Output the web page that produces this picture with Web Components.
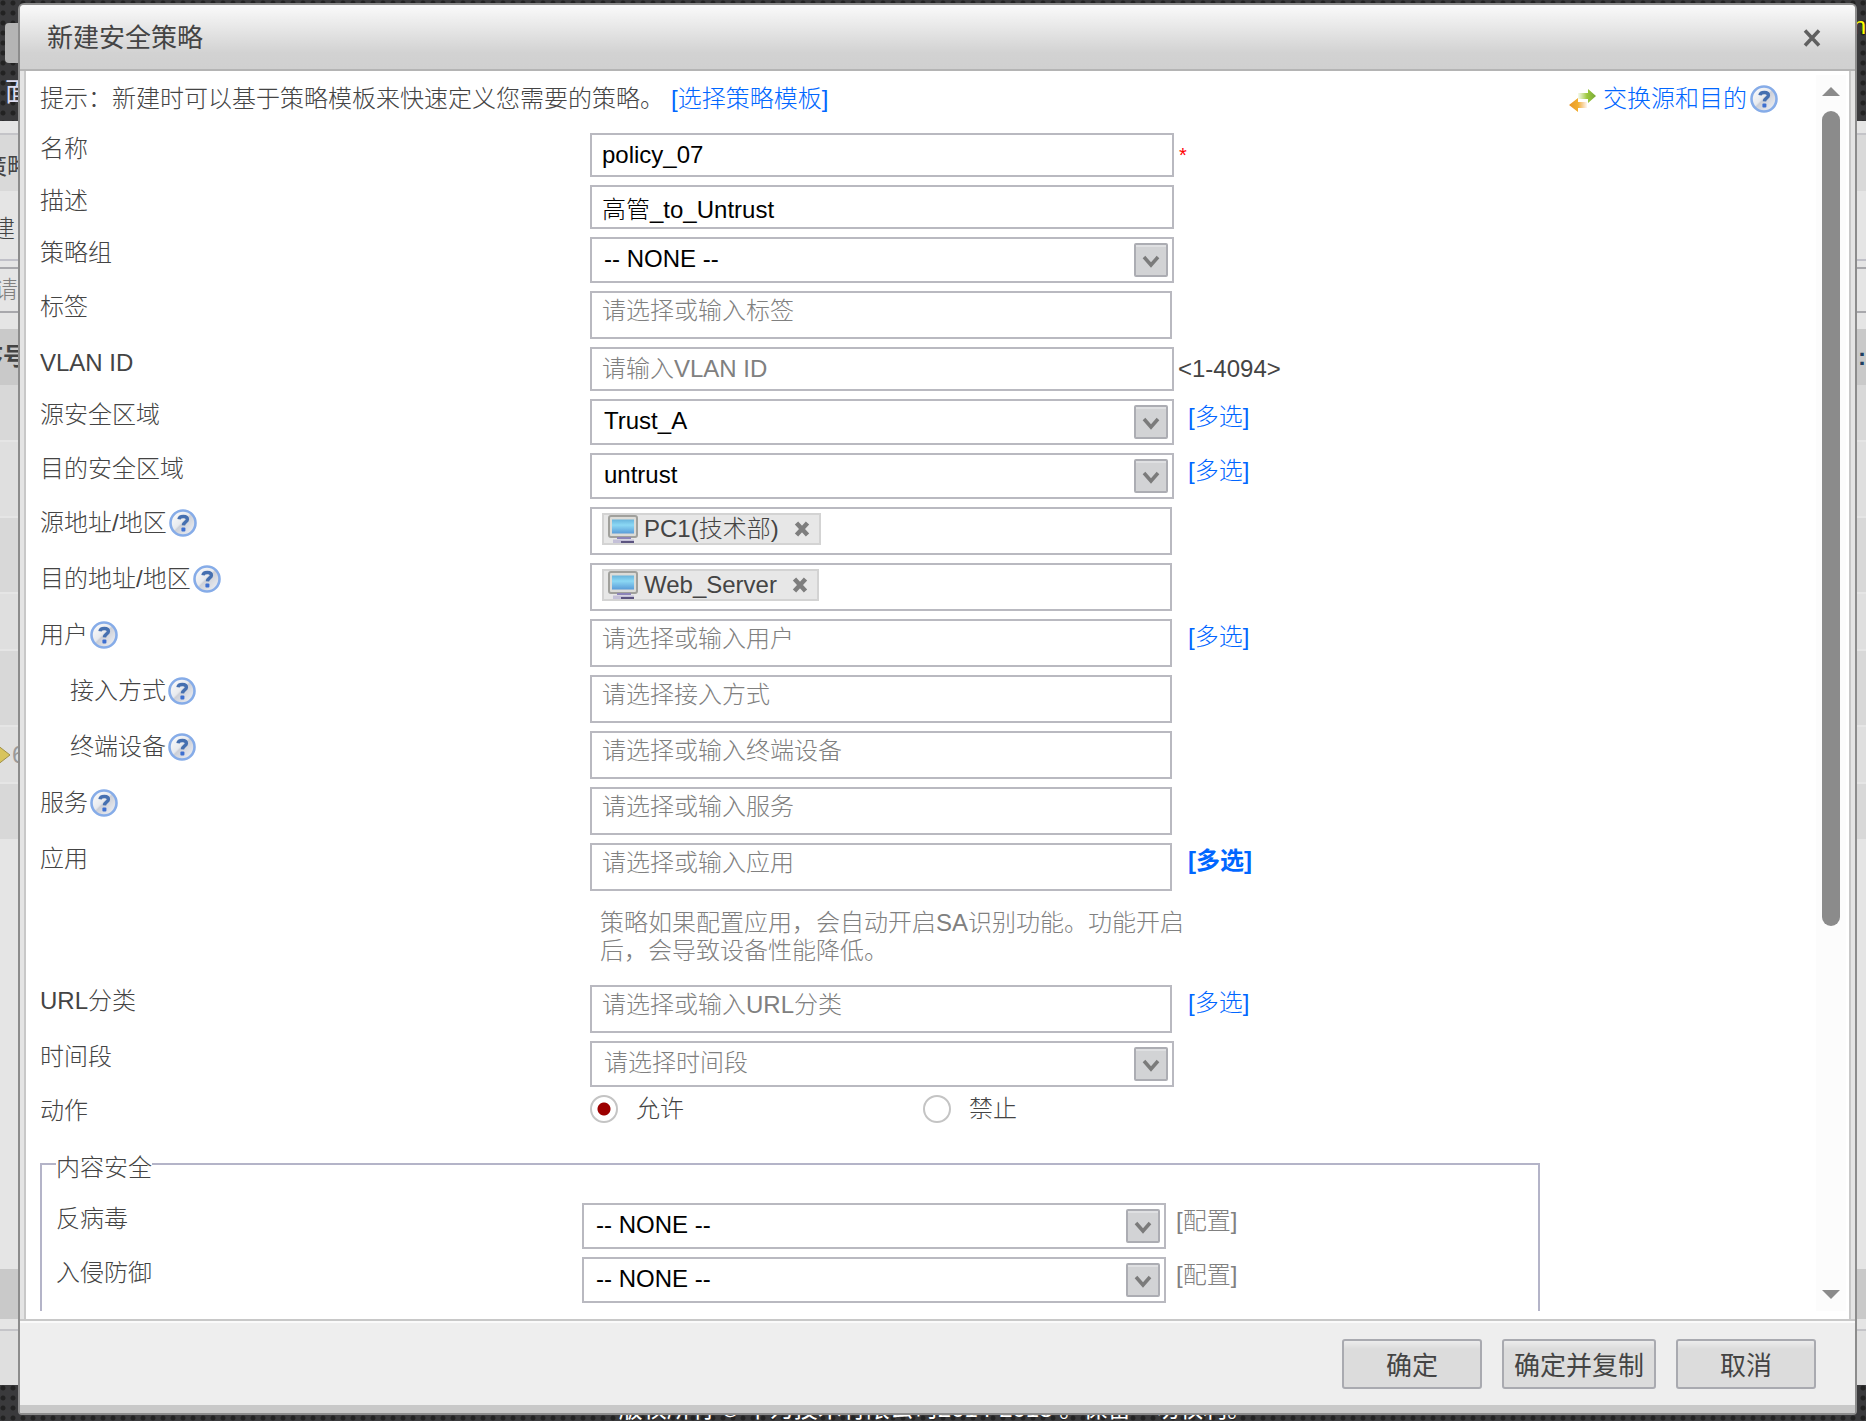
<!DOCTYPE html>
<html lang="zh-CN">
<head>
<meta charset="utf-8">
<title>新建安全策略</title>
<style>
    html, body {
        height: 100%;
        margin: 0;
    }

    body {
        overflow: hidden;
        font-family: "Liberation Sans", "Noto Sans CJK SC", sans-serif;
        font-size: 24px;
        font-weight: 300;
        line-height: 32px;
        color: #444;
    }
</style>
</head>
<body>

<console-backdrop></console-backdrop>

<policy-dialog heading="新建安全策略">
    <tip-bar></tip-bar>
    <text-row label="名称" value="policy_07"><required-mark></required-mark></text-row>
    <text-row label="描述" value="高管_to_Untrust"></text-row>
    <select-row label="策略组" value="-- NONE --"></select-row>
    <token-row label="标签" placeholder="请选择或输入标签"></token-row>
    <text-row label="VLAN ID" placeholder="请输入VLAN ID"><range-hint>&lt;1-4094&gt;</range-hint></text-row>
    <select-row label="源安全区域" value="Trust_A"><row-link>多选</row-link></select-row>
    <select-row label="目的安全区域" value="untrust"><row-link>多选</row-link></select-row>
    <token-row label="源地址/地区" token="PC1(技术部)" help></token-row>
    <token-row label="目的地址/地区" token="Web_Server" help></token-row>
    <token-row label="用户" placeholder="请选择或输入用户" help><row-link>多选</row-link></token-row>
    <token-row label="接入方式" placeholder="请选择接入方式" help indent></token-row>
    <token-row label="终端设备" placeholder="请选择或输入终端设备" help indent></token-row>
    <token-row label="服务" placeholder="请选择或输入服务" help></token-row>
    <token-row label="应用" placeholder="请选择或输入应用"><row-link strong>多选</row-link></token-row>
    <note-row>策略如果配置应用，会自动开启SA识别功能。功能开启后，会导致设备性能降低。</note-row>
    <token-row label="URL分类" placeholder="请选择或输入URL分类"><row-link>多选</row-link></token-row>
    <select-row label="时间段" value="请选择时间段" empty></select-row>
    <radio-row label="动作" options="允许,禁止"></radio-row>
    <field-group legend="内容安全">
        <select-row label="反病毒" value="-- NONE --"><row-link muted>配置</row-link></select-row>
        <select-row label="入侵防御" value="-- NONE --"><row-link muted>配置</row-link></select-row>
    </field-group>
</policy-dialog>

<script>
class HelpIcon extends HTMLElement {

    connectedCallback() {
        this.attachShadow({mode: 'open'}).innerHTML = `
            <style>
                :host { display: inline-flex; }
                svg { display: block; }
            </style>
            <svg width="28" height="28" viewBox="0 0 28 28" role="img" aria-label="help">
                <defs>
                    <linearGradient id="face" x1="0" y1="0" x2="1" y2="1">
                        <stop offset="0" stop-color="#fff"/>
                        <stop offset=".45" stop-color="#e8eaee"/>
                        <stop offset=".5" stop-color="#cdd0d8"/>
                        <stop offset="1" stop-color="#f4f6fa"/>
                    </linearGradient>
                </defs>
                <circle cx="14" cy="14" r="12.5" fill="url(#face)" stroke="#86ace8" stroke-width="2.6"/>
                <path d="M10 10.2C10.4 6.6 18.4 6.4 18.4 10.4C18.4 13 14.6 12.8 14.4 16.4" fill="none" stroke="#4670b0" stroke-width="3.4"/>
                <rect x="12.4" y="18.4" width="4" height="4" rx="1" fill="#3d6fd0"/>
            </svg>
        `;
    }
}

class TipBar extends HTMLElement {

    connectedCallback() {
        this.attachShadow({mode: 'open'}).innerHTML = `
            <style>
                :host {
                    display: flex;
                    justify-content: space-between;
                    padding: 8px 38px 18px 0;
                }

                p { margin: 0; }

                a {
                    color: #06f;
                    text-decoration: none;
                }

                p a { margin-left: 7px; }

                .swap {
                    display: flex;
                    align-items: center;
                    height: 32px;
                }

                .swap svg { margin-right: 5px; }

                help-icon { margin-left: 3px; }
            </style>

            <p>提示：新建时可以基于策略模板来快速定义您需要的策略。<a href="#">[选择策略模板]</a></p>
            <div class="swap">
                <svg width="30" height="28" viewBox="0 0 30 28">
                    <defs>
                        <linearGradient id="green"><stop offset="0" stop-color="#a9cc50" stop-opacity=".1"/><stop offset=".5" stop-color="#9cc83c"/><stop offset="1" stop-color="#78a838"/></linearGradient>
                        <linearGradient id="orange"><stop offset="0" stop-color="#e8962a"/><stop offset=".5" stop-color="#f2ae2e"/><stop offset="1" stop-color="#f0a850" stop-opacity=".1"/></linearGradient>
                    </defs>
                    <path d="M10 8H20V4L28 11L20 18V14H10Z" fill="url(#green)"/>
                    <path d="M19 17H10V13L1 20L10 27V23H19Z" fill="url(#orange)"/>
                </svg>
                <a href="#">交换源和目的</a><help-icon></help-icon>
            </div>
        `;
    }
}

class RequiredMark extends HTMLElement {

    connectedCallback() {
        this.attachShadow({mode: 'open'}).innerHTML = `
            <style>
                :host {
                    display: block;
                    padding: 6px 0 0 5px;
                    color: #f00;
                    font-size: 20px;
                }
            </style>
            *
        `;
    }
}

class RangeHint extends HTMLElement {

    connectedCallback() {
        this.attachShadow({mode: 'open'}).innerHTML = `
            <style>
                :host {
                    display: block;
                    padding: 6px 0 0 4px;
                }
            </style>
            <slot></slot>
        `;
    }
}

class RowLink extends HTMLElement {

    connectedCallback() {
        this.attachShadow({mode: 'open'}).innerHTML = `
            <style>
                :host {
                    display: block;
                    padding: 2px 0 0 14px;
                }

                :host([strong]) { font-weight: bold; }

                :host([muted]) { padding-left: 10px; }

                a {
                    color: #06f;
                    text-decoration: none;
                }

                :host([muted]) a { color: #808080; }
            </style>
            <a href="#">[<slot></slot>]</a>
        `;
    }
}

// label + control + whatever is slotted behind it
class FieldRow extends HTMLElement {

    connectedCallback() {
        this.attachShadow({mode: 'open'}).innerHTML = `
            <style>
                :host {
                    display: grid;
                    grid-template-columns: var(--label-width, 550px) minmax(0, 584px) auto;
                    justify-content: start;
                    margin-bottom: 8px;
                }

                .caption {
                    display: flex;
                    align-items: center;
                    height: 32px;
                }

                :host([indent]) .caption { padding-left: 30px; }

                help-icon { margin-left: 2px; }

                input, select {
                    box-sizing: border-box;
                    width: 100%;
                    margin: 0;
                    border: 2px solid #b9b9c0;
                    border-radius: 0;
                    background: #fff;
                    color: #000;
                    font: inherit;
                    outline: none;
                }

                input::placeholder {
                    color: #808080;
                    opacity: 1;
                }

                ${this.styles()}
            </style>

            <div class="caption">
                <label for="control">${this.getAttribute('label')}</label>
                ${this.hasAttribute('help') ? '<help-icon></help-icon>' : ''}
            </div>
            ${this.control()}
            <slot></slot>
        `;
    }

    styles() {
        return '';
    }

    control() {
        return '';
    }
}

class TextRow extends FieldRow {

    styles() {
        return `
            input {
                height: 44px;
                padding: 0 10px;
            }
        `;
    }

    control() {
        const value = this.getAttribute('value') || '';
        const placeholder = this.getAttribute('placeholder') || '';
        return `<input id="control" type="text" value="${value}" placeholder="${placeholder}">`;
    }
}

class SelectRow extends FieldRow {

    styles() {
        return `
            .select { display: grid; }

            select {
                grid-area: 1 / 1;
                height: 46px;
                padding: 0 44px 2px 12px;
                appearance: none;
            }

            :host([empty]) select { color: #808080; }

            .select svg {
                grid-area: 1 / 1;
                place-self: center end;
                margin-right: 6px;
                pointer-events: none;
            }
        `;
    }

    control() {
        return `
            <div class="select">
                <select id="control"><option>${this.getAttribute('value')}</option></select>
                <svg width="34" height="34" viewBox="0 0 34 34">
                    <rect x="1" y="1" width="32" height="32" rx="1" fill="#d2d3d5" stroke="#acadb3" stroke-width="2"/>
                    <path d="M2 3H32" stroke="#dfe0e2" stroke-width="2"/>
                    <path d="M10 14L17 22L24 14" fill="none" stroke="#7b7b7b" stroke-width="3.500"/>
                </svg>
            </div>
        `;
    }
}

class TokenRow extends FieldRow {

    styles() {
        return `
            .tokens {
                box-sizing: border-box;
                display: flex;
                height: 48px;
                margin-right: 2px;
                padding: 4px 0 8px 10px;
                border: 2px solid #b9b9c0;
            }

            .token {
                box-sizing: border-box;
                display: flex;
                flex: none;
                align-items: center;
                height: 32px;
                padding: 0 9px 0 4px;
                border: 2px solid #d3d3d3;
                background: #e7e7e7;
            }

            .token span { margin: 0 15px 0 6px; }

            .token button {
                display: flex;
                padding: 0;
                border: 0;
                background: none;
            }

            .tokens input {
                flex: 1;
                min-width: 0;
                height: 28px;
                padding: 0;
                border: 0;
            }
        `;
    }

    control() {
        const token = this.getAttribute('token');
        const placeholder = this.getAttribute('placeholder') || '';
        return `
            <div class="tokens">
                ${token ? this.token(token) : ''}
                <input id="control" type="text" placeholder="${placeholder}">
            </div>
        `;
    }

    token(text) {
        return `
            <div class="token">
                <svg width="30" height="28" viewBox="0 0 30 28">
                    <defs>
                        <linearGradient id="screen" x1="0" y1="0" x2="0" y2="1">
                            <stop offset="0" stop-color="#68b4dc"/>
                            <stop offset=".4" stop-color="#8cd8f4"/>
                            <stop offset="1" stop-color="#5a9cd8"/>
                        </linearGradient>
                    </defs>
                    <rect x="1" y="1" width="28" height="21" rx="2" fill="#dcdcd8" stroke="#a0a09c" stroke-width="2"/>
                    <rect x="4" y="4.500" width="22" height="14" fill="url(#screen)"/>
                    <path d="M9 22H23V24H9Z" fill="#8c84b8"/>
                    <path d="M5 24.500H26V28H5Z" fill="#c4c0d8"/>
                    <path d="M13 26H26V28H13Z" fill="#5c5480"/>
                </svg>
                <span>${text}</span>
                <button type="button" aria-label="remove">
                    <svg width="16" height="16" viewBox="0 0 16 16"><path d="M2.500 2L13.500 14M13.500 2L2.500 14" stroke="#7e7e7e" stroke-width="4.500"/></svg>
                </button>
            </div>
        `;
    }
}

class NoteRow extends HTMLElement {

    connectedCallback() {
        this.attachShadow({mode: 'open'}).innerHTML = `
            <style>
                :host {
                    display: block;
                    max-width: 590px;
                    margin: 0 0 20px var(--label-width, 550px);
                    padding: 10px 0 0 10px;
                    color: #808080;
                    line-height: 28px;
                }
            </style>
            <slot></slot>
        `;
    }
}

class RadioRow extends HTMLElement {

    connectedCallback() {
        const options = this.getAttribute('options').split(',');
        this.attachShadow({mode: 'open'}).innerHTML = `
            <style>
                :host {
                    display: grid;
                    grid-template-columns: 550px minmax(0, 666px);
                    height: 32px;
                }

                .options {
                    display: grid;
                    grid-template-columns: 1fr 1fr;
                }

                .option {
                    display: flex;
                    align-items: center;
                    height: 28px;
                }

                input {
                    appearance: none;
                    box-sizing: border-box;
                    width: 28px;
                    height: 28px;
                    margin: 0 18px 0 0;
                    border: 2px solid #c4c4c4;
                    border-radius: 50%;
                    background: #fff;
                }

                input:checked { background: radial-gradient(circle, #9c0000 6px, #fff 7px); }
            </style>

            <span id="caption">${this.getAttribute('label')}</span>
            <div class="options" role="radiogroup" aria-labelledby="caption">
                ${options.map((text, i) => `
                    <div class="option">
                        <input type="radio" name="choice" id="choice${i}" ${i === 0 ? 'checked' : ''}>
                        <label for="choice${i}">${text}</label>
                    </div>
                `).join('')}
            </div>
        `;
    }
}

class FieldGroup extends HTMLElement {

    connectedCallback() {
        this.attachShadow({mode: 'open'}).innerHTML = `
            <style>
                :host {
                    display: block;
                    max-width: 1500px;
                    margin-top: 17px;
                    --label-width: 526px;
                }

                fieldset {
                    margin: 0;
                    padding: 19px 0 60px 14px;
                    border: 2px solid #b4b4c8;
                }

                legend { padding: 8px 0 0; }
            </style>

            <fieldset>
                <legend>${this.getAttribute('legend')}</legend>
                <slot></slot>
            </fieldset>
        `;
    }
}

class PolicyDialog extends HTMLElement {

    connectedCallback() {
        this.attachShadow({mode: 'open'}).innerHTML = `
            <style>
                :host {
                    position: fixed;
                    inset: 3px 9px 6px 18px;
                    display: flex;
                    flex-direction: column;
                    border: 2px solid #8c8c8c;
                    border-radius: 6px 6px 4px 4px;
                    background: #e4e4e4;
                    overflow: hidden;
                }

                header {
                    box-sizing: border-box;
                    display: flex;
                    flex: none;
                    align-items: center;
                    justify-content: space-between;
                    height: 66px;
                    padding: 1px 34px 0 27px;
                    border-bottom: 2px solid #b4b4b4;
                    background: linear-gradient(#fafafa, #d2d2d2 75%, #d0d0d0);
                }

                h1 {
                    margin: 0;
                    font-size: 26px;
                    font-weight: 400;
                }

                header button {
                    display: flex;
                    padding: 0;
                    border: 0;
                    background: none;
                }

                main {
                    display: flex;
                    flex: 1;
                    min-height: 0;
                    margin: 0 4px;
                    padding: 4px 3px 8px 0;
                    border: solid #c8c8c8;
                    border-width: 0 2px;
                    background: #fff;
                }

                form {
                    flex: 1;
                    min-width: 0;
                    padding-left: 14px;
                    overflow: hidden;
                }

                .scrollbar {
                    display: flex;
                    flex-direction: column;
                    align-items: center;
                    width: 30px;
                    padding: 12px 0;
                    box-sizing: border-box;
                    background: #fcfcfc;
                }

                .track {
                    flex: 1;
                    width: 18px;
                    margin: 15px 0;
                }

                .thumb {
                    height: 70%;
                    border-radius: 9px;
                    background: #8b8b8b;
                }

                footer {
                    display: flex;
                    flex: none;
                    justify-content: flex-end;
                    gap: 20px;
                    padding: 18px 39px 16px;
                    border-top: 2px solid #c8c8c8;
                    border-bottom: 8px solid #c8c8c8;
                    box-shadow: inset 0 2px #fafafa;
                    background: #eee;
                }

                footer button {
                    box-sizing: border-box;
                    min-width: 140px;
                    height: 50px;
                    padding: 3px 10px 0;
                    border: 2px solid #a9aab0;
                    border-radius: 3px;
                    background: linear-gradient(#ececec, #dcdcdc 8px);
                    color: #444;
                    font: 400 26px/32px "Liberation Sans", "Noto Sans CJK SC", sans-serif;
                }
            </style>

            <header>
                <h1>${this.getAttribute('heading')}</h1>
                <button type="button" aria-label="close">
                    <svg width="18" height="18" viewBox="0 0 18 18"><path d="M2 1.500L16 16.500M16 1.500L2 16.500" stroke="#606060" stroke-width="3.500"/></svg>
                </button>
            </header>
            <main>
                <form><slot></slot></form>
                <div class="scrollbar">
                    <svg width="18" height="9"><path d="M9 0L18 9H0Z" fill="#8b8b8b"/></svg>
                    <div class="track"><div class="thumb"></div></div>
                    <svg width="18" height="9"><path d="M0 0H18L9 9Z" fill="#8b8b8b"/></svg>
                </div>
            </main>
            <footer>
                <button type="button">确定</button>
                <button type="button">确定并复制</button>
                <button type="button">取消</button>
            </footer>
        `;
    }
}

// the console page, of which only the edges show round the dialog
class ConsoleBackdrop extends HTMLElement {

    connectedCallback() {
        this.attachShadow({mode: 'open'}).innerHTML = `
            <style>
                :host {
                    display: flex;
                    flex-direction: column;
                    height: 100%;
                    overflow: hidden;
                    background: #e5e5e5;
                    white-space: nowrap;
                }

                div { box-sizing: border-box; flex: none; }

                .banner, .copyright {
                    background: radial-gradient(circle at 3px 3px, #222 2px, transparent 3px) 0 0 / 10px 10px, #3a3a3c;
                }

                .banner {
                    display: flex;
                    justify-content: space-between;
                    height: 121px;
                    padding: 10px 0 0 5px;
                }

                .user { color: #ff0; }

                .tab {
                    width: 40px;
                    height: 40px;
                    margin-top: 13px;
                    border-radius: 4px;
                    background: #b4b4b4;
                }

                .menu {
                    margin-top: 13px;
                    color: #dcdcf0;
                    font-size: 26px;
                    font-weight: 400;
                }

                .crumb {
                    height: 72px;
                    margin-top: 12px;
                    padding-top: 16px;
                    border-top: 2px solid #c4c4c8;
                    background: linear-gradient(#d9d9d9 56px, #e5e5e5 56px);
                    font-weight: 400;
                    text-indent: -17px;
                }

                .tools {
                    height: 56px;
                    padding-top: 8px;
                    border-bottom: 2px solid #c0c0c8;
                    text-indent: -9px;
                }

                .search {
                    height: 46px;
                    margin: 6px 0;
                    padding-top: 5px;
                    border: solid #a8a8ac;
                    border-width: 2px 0;
                    color: #808080;
                    text-indent: -6px;
                }

                .head {
                    display: flex;
                    justify-content: space-between;
                    height: 56px;
                    margin-top: 10px;
                    padding-top: 12px;
                    background: #c9c9c9;
                    font-weight: bold;
                    text-indent: -21px;
                }

                .head .more {
                    color: #204060;
                    text-indent: 0;
                }

                .row {
                    height: 57px;
                    border-bottom: 2px solid #e5e5e5;
                    background: #d8d8d8;
                }

                .row:nth-of-type(even) { background: #dfdfdf; }

                .tall { height: 76px; }

                .flag {
                    display: flex;
                    align-items: center;
                    color: #999;
                }

                .pager {
                    height: 50px;
                    margin-top: auto;
                    background: #c9c9c9;
                }

                .base {
                    height: 56px;
                    margin-top: 10px;
                    border-top: 2px solid #c4c4c8;
                    background: #dfdfdf;
                }

                .copyright {
                    height: 36px;
                    padding: 8px 0 0 4px;
                    color: #fff;
                    font-weight: 400;
                    text-align: center;
                }
            </style>

            <div class="banner">
                <div>
                    <div class="tab"></div>
                    <div class="menu">面</div>
                </div>
                <span class="user">n</span>
            </div>
            <div class="crumb">策略</div>
            <div class="tools">建</div>
            <div class="search">请</div>
            <div class="head"><span>序号</span><span class="more">:</span></div>
            <section>
                <div class="row"></div>
                <div class="row tall"></div>
                <div class="row tall"></div>
                <div class="row"></div>
                <div class="row tall"></div>
                <div class="row flag"><svg width="12" height="28"><path d="M-8 0L10 14L-8 28Z" fill="#d8c45c" stroke="#a09048"/></svg>6</div>
                <div class="row"></div>
            </section>
            <div class="pager"></div>
            <div class="base"></div>
            <div class="copyright">版权所有 © 华为技术有限公司2014-2018 。保留一切权利。</div>
        `;
    }
}

customElements.define('help-icon', HelpIcon);
customElements.define('tip-bar', TipBar);
customElements.define('required-mark', RequiredMark);
customElements.define('range-hint', RangeHint);
customElements.define('row-link', RowLink);
customElements.define('text-row', TextRow);
customElements.define('select-row', SelectRow);
customElements.define('token-row', TokenRow);
customElements.define('note-row', NoteRow);
customElements.define('radio-row', RadioRow);
customElements.define('field-group', FieldGroup);
customElements.define('policy-dialog', PolicyDialog);
customElements.define('console-backdrop', ConsoleBackdrop);
</script>
</body>
</html>
